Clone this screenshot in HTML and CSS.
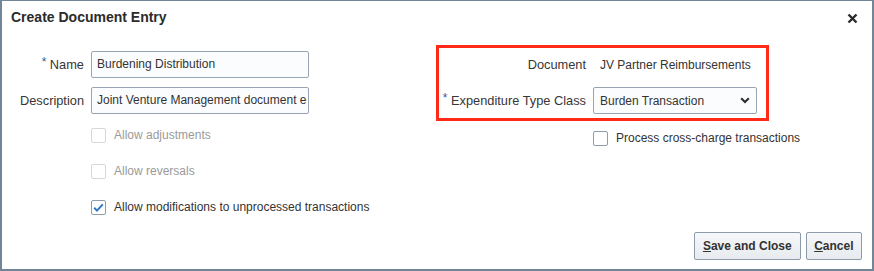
FILE: index.html
```html
<!DOCTYPE html>
<html lang="en">
<head>
<meta charset="utf-8">
<title>Create Document Entry</title>
<link rel="stylesheet" href="styles.css">
</head>
<body>
<div class="dialog">
  <div class="header">
    <h1 class="title">Create Document Entry</h1>
    <button class="close" aria-label="Close">
      <svg width="11" height="11" viewBox="0 0 11 11"><path d="M1.5 1.5 L9.5 9.5 M9.5 1.5 L1.5 9.5" stroke="#2b2b2b" stroke-width="2.4" stroke-linecap="butt"/></svg>
    </button>
  </div>
  <div class="content">
    <div class="left">
      <div class="form-grid">
        <label class="label"><span class="req">*</span> Name</label>
        <div class="input">Burdening Distribution</div>
        <label class="label">Description</label>
        <div class="input">Joint Venture Management document e</div>
      </div>
      <div class="checks">
        <div class="check-row disabled"><span class="box"></span><span>Allow adjustments</span></div>
        <div class="check-row disabled"><span class="box"></span><span>Allow reversals</span></div>
        <div class="check-row"><span class="box checked"><svg width="13" height="13" viewBox="0 0 13 13"><path d="M2.2 6.8 L5 9.6 L10.8 3.4" fill="none" stroke="#2a78cf" stroke-width="2"/></svg></span><span>Allow modifications to unprocessed transactions</span></div>
      </div>
    </div>
    <div class="right">
      <div class="highlight">
        <div class="label">Document</div>
        <div class="value">JV Partner Reimbursements</div>
        <div class="label"><span class="req">*</span> Expenditure Type Class</div>
        <div class="select">
          <span>Burden Transaction</span>
          <svg width="10" height="7" viewBox="0 0 10 7"><path d="M1.2 1.3 L5 5 L8.8 1.3" fill="none" stroke="#2b2b2b" stroke-width="2"/></svg>
        </div>
      </div>
      <div class="check-row right-check"><span class="box"></span><span>Process cross-charge transactions</span></div>
    </div>
  </div>
  <div class="footer">
    <button class="btn"><u>S</u>ave and Close</button>
    <button class="btn btn-cancel"><u>C</u>ancel</button>
  </div>
</div>
</body>
</html>
```

FILE: styles.css
```css
html, body {
  margin: 0;
  padding: 0;
  background: #ffffff;
}

body {
  font-family: "Liberation Sans", Arial, sans-serif;
  font-size: 12px;
  color: #333333;
}

.dialog {
  box-sizing: border-box;
  width: 874px;
  height: 271px;
  border-style: solid;
  border-color: #72869a;
  border-width: 1px 2px 2px 2px;
  display: flex;
  flex-direction: column;
  background: #ffffff;
}

.header {
  display: flex;
  justify-content: space-between;
  align-items: flex-start;
  padding: 8px 0 0 9px;
}

.title {
  margin: 0;
  font-size: 14px;
  line-height: 16px;
  font-weight: bold;
  color: #2b2b2b;
}

.close {
  border: none;
  background: none;
  padding: 0;
  margin: 4px 14px 0 0;
  width: 11px;
  height: 11px;
  display: flex;
}

.content {
  display: flex;
  margin-top: 26px;
}

.left {
  display: flex;
  flex-direction: column;
  width: 307px;
}

.form-grid {
  display: grid;
  grid-template-columns: 82px 218px;
  grid-auto-rows: 27px;
  column-gap: 7px;
  row-gap: 9px;
  align-items: center;
}

.label {
  text-align: right;
  color: #363636;
  font-size: 12.8px;
  white-space: nowrap;
}

.req {
  color: #3b5a98;
  font-size: 12px;
  position: relative;
  top: -3px;
}

.input {
  box-sizing: border-box;
  height: 27px;
  border: 1px solid #97a4b1;
  border-radius: 2px;
  background: #fbfcfe;
  padding: 0 5px;
  line-height: 25px;
  white-space: nowrap;
  overflow: hidden;
  color: #333333;
}

.checks {
  display: flex;
  flex-direction: column;
  margin-top: 3px;
  padding-left: 89px;
}

.check-row {
  display: flex;
  align-items: center;
  height: 36px;
  gap: 8px;
  white-space: nowrap;
}

.box {
  box-sizing: border-box;
  width: 15px;
  height: 15px;
  border: 1px solid #8e9cab;
  border-radius: 2px;
  background: #ffffff;
  display: flex;
  align-items: center;
  justify-content: center;
  flex: none;
}

.check-row.disabled {
  color: #9a9a9a;
}

.check-row.disabled .box {
  border-color: #d3d9df;
}

.right {
  margin-left: 127px;
  margin-top: -6px;
  display: flex;
  flex-direction: column;
}

.highlight {
  box-sizing: border-box;
  width: 333px;
  border: 3px solid #ff2a17;
  padding: 3px 9px 4px 2px;
  display: grid;
  grid-template-columns: 145px 164px;
  grid-auto-rows: 27px;
  column-gap: 7px;
  row-gap: 9px;
  align-items: center;
}

.value {
  padding-left: 7px;
  color: #333333;
  white-space: nowrap;
}

.select {
  box-sizing: border-box;
  height: 27px;
  border: 1px solid #97a4b1;
  border-radius: 2px;
  background: #fbfcfe;
  padding: 0 6px 0 6px;
  display: flex;
  align-items: center;
  justify-content: space-between;
  color: #333333;
}

.right-check {
  padding-left: 157px;
  margin-top: 1px;
  height: 32px;
}

.footer {
  margin-top: auto;
  display: flex;
  justify-content: flex-end;
  gap: 5px;
  padding: 0 10px 9px 0;
}

.btn {
  box-sizing: border-box;
  height: 28px;
  border: 1px solid #8d9cab;
  border-radius: 2px;
  background: linear-gradient(#f6f7f9, #e7ebef);
  font-family: "Liberation Sans", Arial, sans-serif;
  font-size: 12px;
  font-weight: bold;
  color: #333333;
  padding: 0 8px;
  white-space: nowrap;
  cursor: pointer;
}

.btn-cancel {
  padding: 0 7.5px;
}
```
